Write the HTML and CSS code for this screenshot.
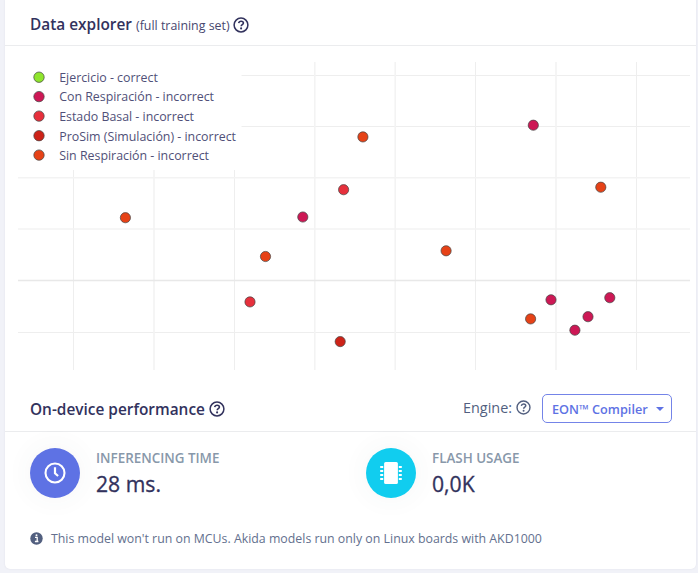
FILE: index.html
```html
<!DOCTYPE html>
<html lang="en">
<head>
<meta charset="utf-8">
<title>Data explorer</title>
<link rel="stylesheet" href="styles.css">
</head>
<body>
<svg class="defs" width="0" height="0" aria-hidden="true">
  <symbol id="help" viewBox="0 0 16 16">
    <circle cx="8" cy="8" r="6.9" fill="none" stroke="currentColor" stroke-width="1.5"/>
    <path d="M5.7 6.2C5.9 4.9 6.8 4.2 8.1 4.2c1.3 0 2.3.8 2.3 1.9 0 1.6-2.2 1.6-2.2 3.1" fill="none" stroke="currentColor" stroke-width="1.6"/>
    <circle cx="8.1" cy="11.4" r="1.05" fill="currentColor"/>
  </symbol>
</svg>
<main class="card">
  <header class="head">
    <h2 class="title">Data explorer</h2>
    <span class="subtitle">(full training set)</span>
    <svg class="help"><use href="#help"/></svg>
  </header>
  <section class="explorer">
    <svg class="plot" viewBox="18 62 672 308">
      <g class="grid">
        <path d="M18 75.5H690M18 126.5H690M18 332.5H690M73.5 62V370M234.5 62V370M475.5 62V370M636.5 62V370"/>
        <path class="wide" d="M18 177.7H690M18 229H690M154 62V370M314.8 62V370M395.2 62V370M556 62V370"/>
        <path class="zero" d="M18 280.5H690"/>
      </g>
      <g class="points">
        <g class="con"><circle cx="533.3" cy="125.2" r="5.1"/><circle cx="302.8" cy="217" r="5.1"/><circle cx="551" cy="299.8" r="5.1"/><circle cx="609.8" cy="297.7" r="5.1"/><circle cx="588" cy="316.7" r="5.1"/><circle cx="574.9" cy="330.2" r="5.1"/></g>
        <g class="basal"><circle cx="343.6" cy="189.7" r="5.1"/><circle cx="250" cy="301.9" r="5.1"/></g>
        <g class="prosim"><circle cx="340.2" cy="341.6" r="5.1"/></g>
        <g class="sin"><circle cx="362.9" cy="136.9" r="5.1"/><circle cx="600.8" cy="187.2" r="5.1"/><circle cx="125.4" cy="217.7" r="5.1"/><circle cx="265.5" cy="256.5" r="5.1"/><circle cx="446.1" cy="250.8" r="5.1"/><circle cx="530.6" cy="318.9" r="5.1"/></g>
      </g>
      <rect class="legend-bg" x="18" y="62" width="223.5" height="108"/>
      <g class="points">
        <circle class="ok" cx="39" cy="77.2" r="5.2"/>
        <circle class="con" cx="39" cy="96.6" r="5.2"/>
        <circle class="basal" cx="39" cy="116.1" r="5.2"/>
        <circle class="prosim" cx="39" cy="135.7" r="5.2"/>
        <circle class="sin" cx="39" cy="155.1" r="5.2"/>
      </g>
      <g class="legend">
        <text x="59.2" y="82" textLength="98.6">Ejercicio - correct</text>
        <text x="59.2" y="101.4" textLength="154.8">Con Respiración - incorrect</text>
        <text x="59.2" y="120.8" textLength="134.8">Estado Basal - incorrect</text>
        <text x="59.2" y="140.5" textLength="176.8">ProSim (Simulación) - incorrect</text>
        <text x="59.2" y="160" textLength="149.8">Sin Respiración - incorrect</text>
      </g>
    </svg>
  </section>
  <header class="head perf-head">
    <h2 class="title">On-device performance</h2>
    <svg class="help"><use href="#help"/></svg>
    <div class="engine">
      <span class="engine-label">Engine:</span>
      <svg class="help help-small"><use href="#help"/></svg>
      <button class="select" type="button"><span>EON™ Compiler</span><i class="caret"></i></button>
    </div>
  </header>
  <section class="stats">
    <div class="stat">
      <div class="badge time">
        <svg width="22" height="22" viewBox="0 0 22 22"><circle cx="11" cy="11" r="9.5" fill="none" stroke="#fff" stroke-width="2.1"/><path d="M11 5.3V11.3L14.1 14" fill="none" stroke="#fff" stroke-width="2.2"/></svg>
      </div>
      <div><div class="label">INFERENCING TIME</div><div class="value">28 ms.</div></div>
    </div>
    <div class="stat">
      <div class="badge flash">
        <svg width="22" height="22" viewBox="0 0 22 22"><rect x="4.1" y="0" width="13.8" height="22" rx="1.6" fill="#fff"/><path d="M0.2 5H3.2M0.2 9H3.2M0.2 13H3.2M0.2 17H3.2M18.8 5H21.8M18.8 9H21.8M18.8 13H21.8M18.8 17H21.8" stroke="#fff" stroke-width="1.8"/></svg>
      </div>
      <div><div class="label">FLASH USAGE</div><div class="value">0,0K</div></div>
    </div>
  </section>
  <footer class="note">
    <svg width="13" height="13" viewBox="0 0 13 13"><circle cx="6.5" cy="6.5" r="6.2" fill="#525f7f"/><path d="M5 5.4H7.2V9.3M4.9 9.5H8.4" fill="none" stroke="#fff" stroke-width="1.3"/><circle cx="6.5" cy="3.2" r="1" fill="#fff"/></svg>
    <span>This model won't run on MCUs. Akida models run only on Linux boards with AKD1000</span>
  </footer>
</main>
</body>
</html>
```
FILE: styles.css
```css
* { box-sizing: border-box; }
body { margin: 0; height: 573px; overflow: hidden; background: #f1f2f8; font-family: "Open Sans", sans-serif; color: #32325d; }
.defs { display: block; }
.card { margin-left: 5px; width: 691px; height: 569px; background: #fff; border-radius: 0 0 5px 5px; box-shadow: 0 0 2px rgba(60, 60, 90, .1); overflow: hidden; }
.head { display: flex; align-items: center; height: 46px; padding: 4px 24px 0 25px; border-bottom: 1px solid #ebecee; white-space: nowrap; }
.title { margin: 1px 0 0; font-size: 15.4px; font-weight: 600; line-height: 22px; }
.subtitle { margin: 2px 0 0 4px; font-size: 12.4px; color: #47476f; }
.help { width: 16px; height: 16px; margin-left: 4px; flex: none; }
.head:first-child .help { margin-left: 3.5px; }
.explorer { height: 340px; padding: 16px 0 0 13px; }
.plot { display: block; width: 672px; height: 308px; }
.grid { fill: none; stroke: #eee; stroke-width: 1; }
.wide { stroke: #f3f3f3; stroke-width: 1.6; }
.zero { stroke: #e8e8e8; stroke-width: 1.6; }
.points { stroke: #444; stroke-width: .7; }
.ok { fill: #8fe52d; }
.con { fill: #cd1855; }
.basal { fill: #e6303c; }
.prosim { fill: #cd2318; }
.sin { fill: #e64217; }
.legend-bg { fill: #fff; }
.legend { font-size: 12.4px; fill: #505078; }
.perf-head { padding-top: 0; }
.perf-head .title { margin-top: 2px; }
.engine { display: flex; align-items: center; margin-left: auto; color: #525f7f; }
.engine-label { font-size: 14.4px; margin-top: -3px; }
.help-small { width: 15px; height: 15px; margin: -2px 0 0 4px; }
.select { display: flex; align-items: center; width: 130px; height: 29px; margin-left: 11px; padding: 0 7px 0 9px; border: 1px solid #7484e8; border-radius: 5px; background: #fff; color: #5e72e4; font: 600 12.7px "Open Sans", sans-serif; white-space: nowrap; }
.caret { margin-left: auto; border: 4.5px solid transparent; border-top-color: #5e72e4; border-bottom: 0; }
.stats { display: flex; height: 82px; padding: 16px 0 0 25px; }
.stat { display: flex; flex: 0 0 336px; }
.badge { display: flex; flex: none; align-items: center; justify-content: center; width: 50px; height: 50px; margin-right: 16px; border-radius: 50%; box-shadow: 0 0 28px rgba(60, 90, 90, .06); }
.time { background: #5e72e4; }
.flash { background: #11cdef; }
.label { font-size: 13.4px; line-height: 20px; font-weight: 600; color: #8898aa; white-space: nowrap; }
.value { margin-top: 2px; font-size: 21.2px; line-height: 28px; font-weight: 500; -webkit-text-stroke: .3px #32325d; }
.note { display: flex; align-items: center; height: 48px; padding: 0 25px; font-size: 12.35px; color: #63708e; white-space: nowrap; }
.note svg { margin-right: 8px; flex: none; }
```
